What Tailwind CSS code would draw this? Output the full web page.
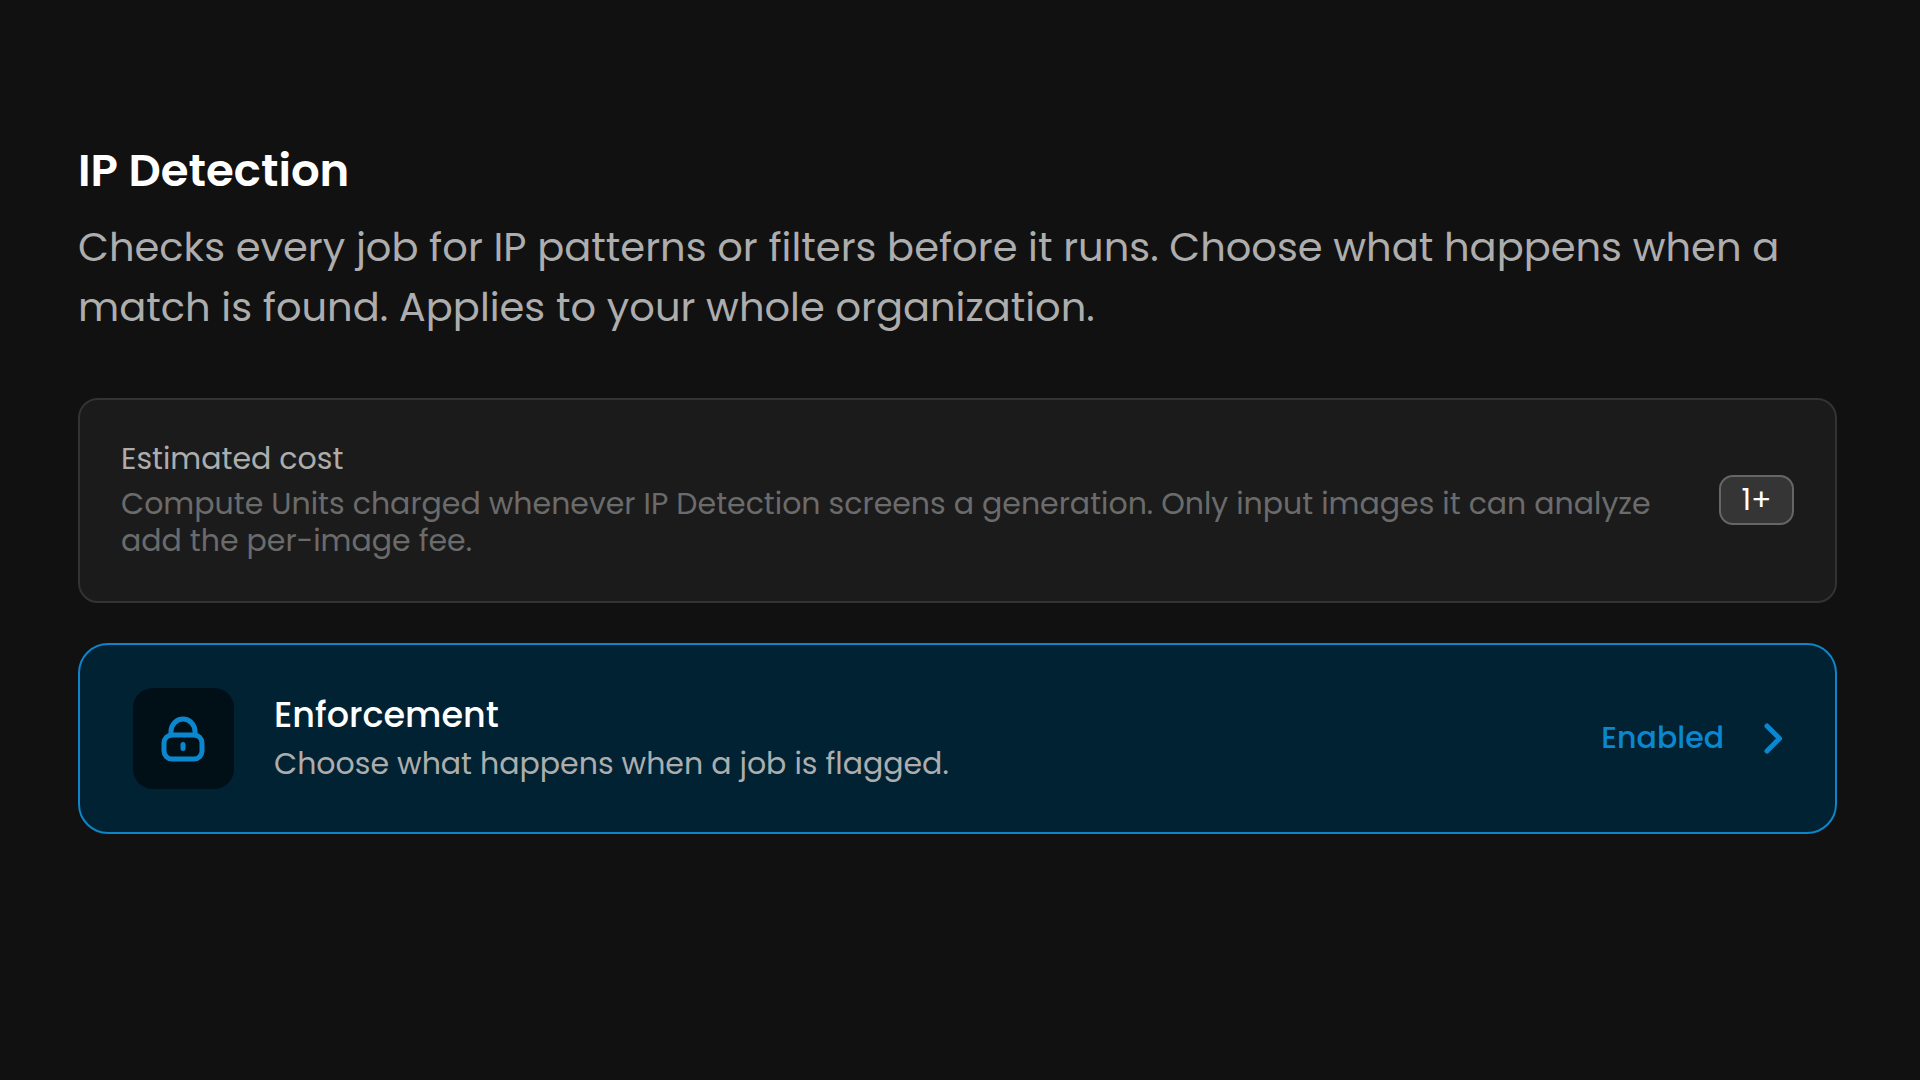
<!DOCTYPE html>
<html lang="en">

<head>
    <meta charset="UTF-8">
    <meta name="viewport" content="width=device-width, initial-scale=1.0">
    <title>IP Detection</title>
    <script src="https://cdn.jsdelivr.net/npm/@tailwindcss/browser@4"></script>
</head>

<body class="min-h-screen bg-[#111111] font-[Poppins,Inter,sans-serif] text-white">
    <main class="flex flex-col pt-[141px] pl-[78px] pr-[83px] pb-20">
        <header>
            <h1 class="text-[45px] leading-[60px] font-semibold">IP Detection</h1>
            <p class="mt-4 text-[40px] leading-[60px] text-[#adadad]">Checks every job for IP patterns or filters before it runs. Choose what happens when a match is found. Applies to your whole organization.</p>
        </header>

        <section class="mt-[61px] flex items-center justify-between gap-[60px] rounded-[20px] border-2 border-[#333333] bg-[#1b1b1b] px-[41px] pt-10 pb-[42px]">
            <div>
                <h2 class="text-[30px] leading-[37px] text-[#adadad]">Estimated cost</h2>
                <p class="mt-2 text-[30px] leading-[37px] text-[#6b6b6b]">Compute Units charged whenever IP Detection screens a generation. Only input images it can analyze add the per-image fee.</p>
            </div>
            <span class="flex h-[50px] w-[75px] shrink-0 items-center justify-center rounded-[14px] border-2 border-[#666666] bg-[#353535] text-[30px] leading-[37px]">1+</span>
        </section>

        <button type="button" class="mt-10 flex items-center rounded-[30px] border-2 border-[#0f85c9] bg-[#012233] pl-[53px] pr-[51px] py-[43px] text-left">
            <span class="flex size-[101px] shrink-0 items-center justify-center rounded-[20px] bg-[#010f17]">
                <svg class="size-12 text-[#0b87cf]" viewBox="0 0 48 48" fill="none" stroke="currentColor" stroke-width="5" stroke-linecap="round" stroke-linejoin="round">
                    <path d="M11 20v-3.500a12 12.500 0 0 1 24 0V20" />
                    <rect x="4" y="20" width="38" height="24" rx="8" />
                    <path d="M23 29.500v4" />
                </svg>
            </span>
            <span class="ml-10 flex flex-1 flex-col gap-2 pb-[2px]">
                <span class="text-[35px] leading-[44px] font-medium">Enforcement</span>
                <span class="text-[30px] leading-[37px] text-[#adadad]">Choose what happens when a job is flagged.</span>
            </span>
            <span class="flex items-center gap-10 pb-[2px] text-[#0b87cf]">
                <span class="text-[30px] leading-[37px] font-medium">Enabled</span>
                <svg class="h-8 w-5" viewBox="0 0 20 32" fill="none" stroke="currentColor" stroke-width="5" stroke-linecap="round" stroke-linejoin="round">
                    <path d="M3 4l12.500 12.500L3 29" />
                </svg>
            </span>
        </button>
    </main>
</body>

</html>
